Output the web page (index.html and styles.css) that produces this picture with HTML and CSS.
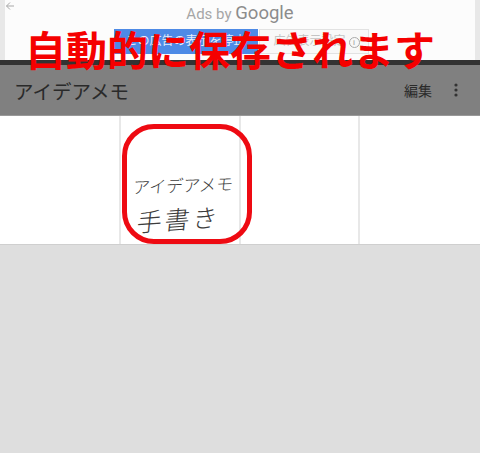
FILE: index.html
```html
<!DOCTYPE html>
<html lang="ja">
<head>
<meta charset="utf-8">
<title>アイデアメモ</title>
<link rel="stylesheet" href="styles.css">
</head>
<body>
<div class="page">
  <section class="ad">
    <svg class="back" width="10" height="10" viewBox="0 0 10 10"><path d="M9 5H1.5M5 1.5 1.5 5 5 8.5" fill="none" stroke="#a8a8a8" stroke-width="1"/></svg>
    <div class="ad-label">Ads by <span class="google">Google</span></div>
    <div class="ad-buttons">
      <span class="ad-stop">この広告の表示を停止</span>
      <span class="ad-why">広告表示設定 <i class="info">i</i></span>
    </div>
  </section>
  <div class="strip"></div>
  <header class="bar">
    <h1 class="title">アイデアメモ</h1>
    <span class="edit">編集</span>
    <svg class="more" width="4" height="14" viewBox="0 0 4 14"><circle cx="2" cy="2" r="1.6"/><circle cx="2" cy="7" r="1.6"/><circle cx="2" cy="12" r="1.6"/></svg>
  </header>
  <main class="grid">
    <div class="cell"></div>
    <div class="cell memo">
      <span class="hand hand-1">アイデアメモ</span>
      <span class="hand hand-2">手書き</span>
    </div>
    <div class="cell"></div>
    <div class="cell last"></div>
  </main>
  <div class="caption">自動的に保存されます</div>
  <div class="highlight"></div>
</div>
</body>
</html>
```
FILE: styles.css
```css
* { box-sizing: border-box; }
html, body { margin: 0; padding: 0; }
body { background: #dedede; font-family: "Roboto", "Noto Sans CJK JP", sans-serif; }
.page { position: relative; width: 480px; height: 453px; overflow: hidden; background: #dedede; }

.ad { position: relative; height: 60px; background: #fcfcfc; border-left: 5px solid #e8e8e8; border-right: 5px solid #e8e8e8; display: flex; flex-direction: column; align-items: center; padding-top: 3px; }
.back { position: absolute; left: 0; top: 1px; }
.ad-label { font-size: 15px; line-height: 20px; color: #a6a6a6; }
.google { font-size: 18.5px; color: #8c8c8c; font-weight: 400; }
.ad-buttons { display: flex; margin-top: 5px; margin-left: 2px; height: 25px; font-size: 12px; line-height: 25px; }
.ad-stop { width: 144px; background: #4d8ae6; color: #e4edfb; text-align: center; white-space: nowrap; overflow: hidden; }
.ad-why { width: 110px; margin-left: 1px; background: #f8f8f8; border: 1px solid #e2e2e2; color: #c4c4c4; text-align: right; padding-right: 8px; white-space: nowrap; overflow: hidden; line-height: 23px; }
.info { display: inline-block; width: 11px; height: 11px; border: 1px solid #aaa; border-radius: 50%; font-size: 8px; line-height: 9px; text-align: center; font-style: normal; color: #999; }

.strip { height: 5px; background: #333; }
.bar { height: 51px; background: #808080; border-bottom: 1px solid #999; display: flex; align-items: center; padding: 0 22px 0 14px; color: #2a2a2a; }
.title { margin: 0; flex: 1; font-size: 19.5px; font-weight: 400; letter-spacing: 0; }
.edit { font-size: 14px; margin-right: 22px; }
.more { fill: #333; }

.grid { height: 129px; display: grid; grid-template-columns: 121px 120px 119px 120px; background: #fff; border-bottom: 1px solid #cfcfcf; }
.cell { border-right: 2px solid #e8e8e8; }
.cell.last { border-right: 0; }
.memo { display: flex; flex-direction: column; align-items: center; padding-top: 58px; }
.hand { font-family: "Noto Sans CJK JP", sans-serif; font-weight: 300; color: #3c3c3c; white-space: nowrap; }
.hand-1 { font-size: 17px; line-height: 22px; transform: rotate(-2deg) skewX(-8deg); margin-left: 7px; }
.hand-2 { font-size: 25px; line-height: 30px; margin-top: 7px; margin-left: -2px; letter-spacing: 3px; transform: rotate(-4deg) skewX(-10deg); }

.caption { position: absolute; left: 25px; top: 26px; font-family: "Noto Sans CJK JP", sans-serif; font-size: 41px; line-height: 44px; font-weight: 700; color: #f50000; white-space: nowrap; }
.highlight { position: absolute; left: 122px; top: 124px; width: 130px; height: 120px; border: 5px solid #ee0a12; border-radius: 32px; }
```
